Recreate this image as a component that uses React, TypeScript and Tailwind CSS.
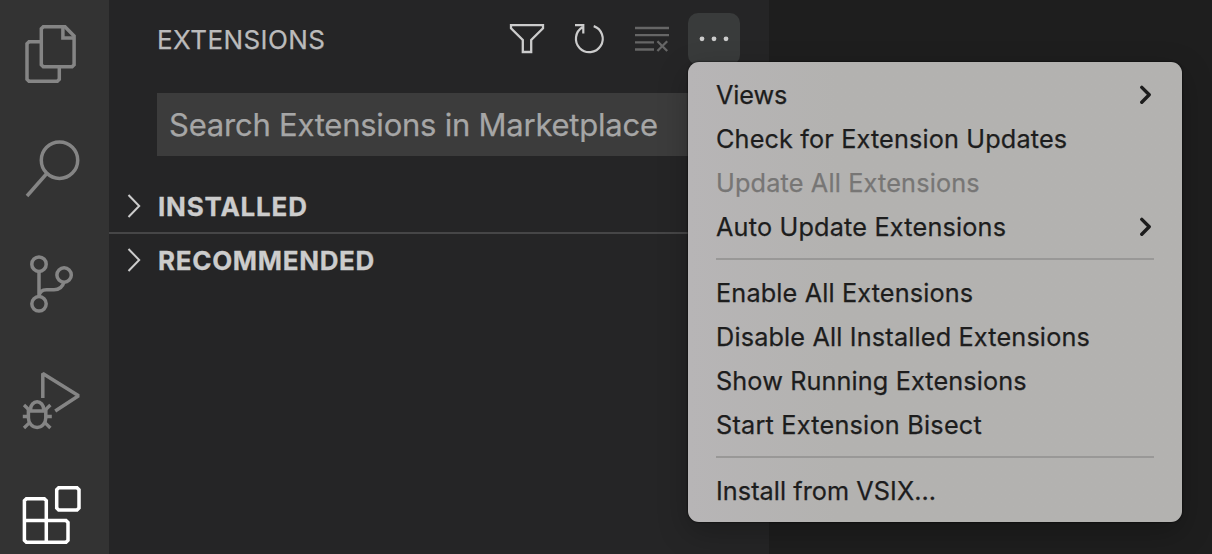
import type { ReactNode } from "react";

type MenuEntry =
  | { kind: "item"; label: string; submenu?: boolean; disabled?: boolean; tracking: string }
  | { kind: "separator" };

const menuEntries: MenuEntry[] = [
  { kind: "item", label: "Views", submenu: true, tracking: "tracking-[-0.1px]" },
  { kind: "item", label: "Check for Extension Updates", tracking: "tracking-[0.14px]" },
  { kind: "item", label: "Update All Extensions", disabled: true, tracking: "tracking-[0.16px]" },
  { kind: "item", label: "Auto Update Extensions", submenu: true, tracking: "tracking-[0.18px]" },
  { kind: "separator" },
  { kind: "item", label: "Enable All Extensions", tracking: "tracking-[0.14px]" },
  { kind: "item", label: "Disable All Installed Extensions", tracking: "tracking-[0.155px]" },
  { kind: "item", label: "Show Running Extensions", tracking: "tracking-[0.11px]" },
  { kind: "item", label: "Start Extension Bisect", tracking: "tracking-[0.22px]" },
  { kind: "separator" },
  { kind: "item", label: "Install from VSIX...", tracking: "tracking-[0.05px]" },
];

function ActivityIcon({ viewBox, label, className, children }: { viewBox: string; label: string; className: string; children: ReactNode }) {
  return (
    <button aria-label={label} className="block w-full shrink-0">
      <svg viewBox={viewBox} className={`block w-full ${className}`} fill="none" stroke="currentColor" strokeWidth="3.5">
        {children}
      </svg>
    </button>
  );
}

function ActivityBar() {
  return (
    <nav className="flex h-full w-[109px] shrink-0 flex-col overflow-hidden bg-[#333333] text-[#858585]">
      <ActivityIcon label="Explorer" viewBox="0 0 109 112" className="h-[112px]">
        <path d="M43.3 26.7H65L74.1 36V64.8L72.1 66.8H43.3L41.3 64.8V28.7Z" />
        <path d="M62.9 26.7V38H74" />
        <path d="M40 41.7H29L27 43.7V79.2L29 81.2H57.3L59.3 79.2V68" />
      </ActivityIcon>
      <ActivityIcon label="Search" viewBox="0 112 109 116" className="h-[116px]">
        <circle cx="59.5" cy="160.2" r="18.2" />
        <path d="M46.8 173.5L27 196" />
      </ActivityIcon>
      <ActivityIcon label="Source Control" viewBox="0 228 109 116" className="h-[116px]">
        <circle cx="39" cy="264.2" r="7.2" />
        <circle cx="64.1" cy="275" r="7.2" />
        <circle cx="39" cy="303.8" r="7.2" />
        <path d="M39 271V297M39 296C39.5 292 42.5 289.8 46.5 289.8H54C59.5 289.8 62.6 287 64 282" />
      </ActivityIcon>
      <ActivityIcon label="Run and Debug" viewBox="0 344 109 116" className="h-[116px]">
        <path d="M42.8 398V373.4L78.6 395.7L55.2 411" strokeLinejoin="bevel" />
        <path d="M28.4 411H45.8V418A8.7 9.4 0 0 1 28.4 418ZM30.6 411V409.2A6.5 7.4 0 0 1 43.6 409.2V411" strokeWidth="3.5" />
        <path d="M22.8 416.5H28M46 416.5H51.8M24 405L29.5 410.3M50.4 405L44.9 410.3M24 428L29.5 422.6M50.4 428L44.9 422.6" strokeWidth="3.3" />
      </ActivityIcon>
      <ActivityIcon label="Extensions" viewBox="0 460 109 94" className="h-[94px] text-white">
        <path d="M26.4 498.7H44.3L46.3 500.7V520.4H66L68 522.4V540.3L66 542.3H26.4L24.4 540.3V500.7Z" />
        <path d="M24.4 520.4H46.3V542.3" />
        <path d="M58.7 487.7H77L79 489.7V508L77 510H58.7L56.7 508V489.7Z" />
      </ActivityIcon>
    </nav>
  );
}

function Section({ title, className }: { title: string; className: string }) {
  return (
    <div className="flex h-[52px] items-center pl-[17px]">
      <svg viewBox="0 0 16 26" className="h-[26px] w-4" fill="none" stroke="#cccccc" strokeWidth="2">
        <path d="M2.5 2L13.2 13L2.5 24" />
      </svg>
      <span className={`ml-4 pt-0.5 font-bold leading-none text-[#cccccc] [-webkit-text-stroke:0.3px_#cccccc] ${className}`}>{title}</span>
    </div>
  );
}

function SidePanel() {
  return (
    <aside className="flex h-full w-[660px] shrink-0 flex-col bg-[#252526]">
      <header className="flex h-[93px] items-start pl-[48px]">
        <h1 className="w-[343px] pt-[27px] text-[26px] leading-[26px] tracking-[0.42px] text-[#bbbbbb] [-webkit-text-stroke:0.25px_#bbbbbb]">
          <span>EXTENSIONS</span>
        </h1>
        <svg viewBox="500 0 188 78" className="h-[78px] w-[188px]" fill="none" stroke="#cccccc" strokeWidth="2.3">
          <path d="M511 25.2H543V28.3L531.2 40V52H522.8V40L511 28.3Z" />
          <path d="M593.7 26.1A13.4 13.4 0 1 1 582.4 27.3M575 25.2H583.3V33.6" strokeWidth="2.2" />
          <path d="M635 28H669M635 35.1H669M635 42.4H654M635 49.5H654M657.4 41.3L667.2 51M667.2 41.3L657.4 51" stroke="#666666" />
        </svg>
        <button aria-label="More actions" className="mt-[13px] h-[52px] w-[52px] rounded-[10px] bg-[#393b3b]">
          <svg viewBox="688 13 52 52" className="block h-full w-full" fill="#cccccc">
            <circle cx="702" cy="38.8" r="2.4" />
            <circle cx="714" cy="38.8" r="2.4" />
            <circle cx="726" cy="38.8" r="2.4" />
          </svg>
        </button>
      </header>
      <div className="ml-[48px] flex h-[63px] shrink-0 items-center bg-[#3c3c3c] pl-[12px] text-[31px] leading-none text-[#a6a6a6] [-webkit-text-stroke:0.25px_#a6a6a6]">
        <span className="tracking-[-0.23px]">Search Extensions in Marketplace</span>
      </div>
      <div className="mt-6 flex flex-col">
        <Section title="INSTALLED" className="text-[26px] tracking-[0.8px]" />
        <div className="border-t-2 border-[#464647]">
          <Section title="RECOMMENDED" className="text-[26px] tracking-[0.68px]" />
        </div>
      </div>
    </aside>
  );
}

function ContextMenu() {
  return (
    <div className="absolute left-[688px] top-[62px] flex h-[460px] w-[494px] flex-col rounded-[11px] bg-linear-to-r from-[#b7b5b6] to-[#b3b2b0] to-30% px-7 pt-2.5 text-[25.25px] text-[#1d1d1d] shadow-[0_0_2px_#000,0_10px_30px_rgba(0,0,0,0.25)]">
      {menuEntries.map((entry, i) =>
        entry.kind === "separator" ? (
          <div key={i} className="flex h-[22px] items-center">
            <div className="h-0.5 w-full bg-[#999897]" />
          </div>
        ) : (
          <div key={i} className={`flex h-11 items-center justify-between ${entry.disabled ? "text-[#777675]" : ""}`}>
            <span className={`whitespace-nowrap pt-px leading-8 [-webkit-text-stroke:0.25px_currentColor] ${entry.tracking}`}>{entry.label}</span>
            {entry.submenu && (
              <svg viewBox="0 0 16 20" className="h-5 w-4" fill="none" stroke="currentColor" strokeWidth="3.4" strokeLinecap="round" strokeLinejoin="round">
                <path d="M3.8 3.4L11.2 10.8L3.8 18.2" />
              </svg>
            )}
          </div>
        ),
      )}
    </div>
  );
}

export default function App() {
  return (
    <div className="relative flex h-[554px] w-[1212px] overflow-hidden bg-[#1e1e1e] font-['Inter',sans-serif]">
      <ActivityBar />
      <SidePanel />
      <ContextMenu />
    </div>
  );
}
